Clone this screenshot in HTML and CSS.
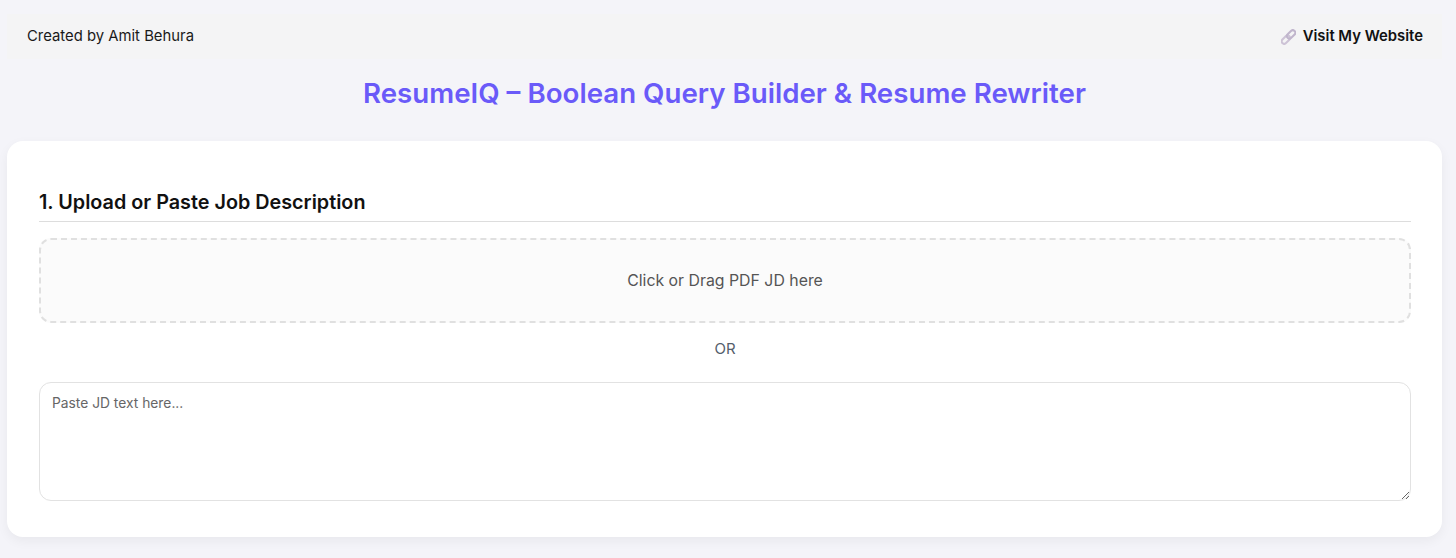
FILE: index.html
```html
<!DOCTYPE html>
<html lang="en">
<head>
    <meta charset="UTF-8">
    <meta name="viewport" content="width=device-width, initial-scale=1.0">
    <title>ResumeIQ</title>
    <link rel="stylesheet" href="styles.css">
</head>
<body>
    <div class="top-bar">
        <span class="credit">Created by Amit Behura</span>
        <a class="site-link" href="#">
            <svg class="link-icon" width="15" height="16" viewBox="0 0 16 17" fill="none">
                <rect x="-5.2" y="-2.7" width="10.4" height="5.4" rx="2.7" transform="translate(5.2 11.3) rotate(-45)" stroke="#cdc3d6" stroke-width="2.2"/>
                <rect x="-5.2" y="-2.7" width="10.4" height="5.4" rx="2.7" transform="translate(10.8 5.7) rotate(-45)" stroke="#c0b5cc" stroke-width="2.2"/>
            </svg>
            Visit My Website
        </a>
    </div>

    <h1 class="title">ResumeIQ – Boolean Query Builder &amp; Resume Rewriter</h1>

    <div class="card">
        <h2 class="section-title">1. Upload or Paste Job Description</h2>
        <div class="drop-zone">Click or Drag PDF JD here</div>
        <div class="or-text">OR</div>
        <textarea class="jd-text" placeholder="Paste JD text here..."></textarea>
    </div>
</body>
</html>
```

FILE: styles.css
```css
* {
    margin: 0;
    padding: 0;
    box-sizing: border-box;
    font-family: 'Inter', sans-serif;
}

body {
    background-color: #f4f4f9;
    height: 558px;
    overflow: hidden;
    padding-top: 14px;
}

.top-bar {
    display: flex;
    justify-content: space-between;
    align-items: center;
    height: 45px;
    margin: 0 14px 0 7px;
    padding: 0 19px 2px 20px;
    background-color: #f4f4f5;
    font-size: 14.85px;
}

.credit {
    color: #1a1a1a;
}

.site-link {
    display: flex;
    align-items: center;
    gap: 7px;
    color: #111;
    font-weight: 600;
    text-decoration: none;
}

.link-icon {
    margin-top: 3px;
}

.title {
    margin-top: 17px;
    color: #6a5af9;
    font-size: 27.7px;
    font-weight: 600;
    line-height: 34px;
    text-align: center;
    padding-right: 7px;
    margin-bottom: 31px;
}

.card {
    margin: 0 14px 0 7px;
    height: 396px;
    padding: 48px 31px 0 32px;
    background: white;
    border-radius: 16px;
    box-shadow: 0 4px 12px rgba(0,0,0,0.05);
}

.section-title {
    padding-bottom: 6px;
    border-bottom: 1px solid #ddd;
    color: #111;
    font-size: 19.8px;
    font-weight: 600;
    line-height: 26px;
}

.drop-zone {
    display: flex;
    align-items: center;
    justify-content: center;
    height: 85px;
    margin-top: 16px;
    border: 2px dashed #e0e0e0;
    border-radius: 12px;
    background-color: #fbfbfb;
    color: #555;
    font-size: 15.85px;
}

.or-text {
    margin-top: 16px;
    color: #555e6b;
    font-size: 15px;
    line-height: 20px;
    text-align: center;
}

.jd-text {
    display: block;
    width: 100%;
    height: 119px;
    margin-top: 23px;
    padding: 12px;
    border: 1px solid #e2e2e2;
    border-radius: 12px;
    background: white;
    font-size: 13.8px;
    line-height: 17px;
    outline: none;
}

.jd-text::placeholder {
    color: #666;
}
```
